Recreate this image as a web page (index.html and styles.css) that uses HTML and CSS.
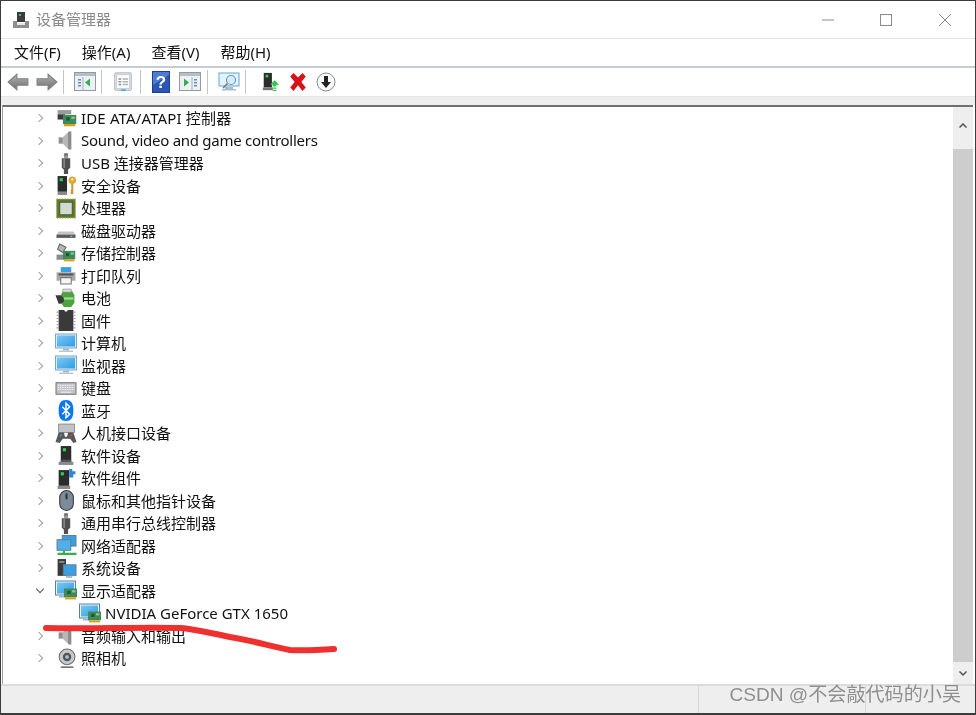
FILE: index.html
```html
<!DOCTYPE html>
<html lang="zh-CN">
<head>
<meta charset="utf-8">
<title>设备管理器</title>
<link rel="stylesheet" href="styles.css">
</head>
<body>
<svg class="defs" width="0" height="0" aria-hidden="true">
  <defs>
    <linearGradient id="arrow-grad" x1="0" y1="0" x2="0" y2="1"><stop offset="0" stop-color="#b4b4b4"/><stop offset="1" stop-color="#6e6e6e"/></linearGradient>
    <linearGradient id="screen-grad" x1="0" y1="0" x2="1" y2="1"><stop offset="0" stop-color="#7cc8f2"/><stop offset="1" stop-color="#2f9ce6"/></linearGradient>
    <symbol id="card" viewBox="0 0 12 12"><rect x="0" y="1" width="12" height="8" fill="#3f8a5a"/><rect x="3" y="3" width="3" height="3" fill="#1d5a38"/><rect x="7.5" y="2.5" width="3" height="2" fill="#8fc79a"/><rect x="1" y="9" width="10" height="2" fill="#d8a020"/></symbol>
    <symbol id="plug" viewBox="0 0 20 20"><rect x="8" y="0" width="4" height="5" fill="#9a9a9a"/><rect x="8.8" y="1.2" width="0.9" height="1.2" fill="#333"/><rect x="10.4" y="1.2" width="0.9" height="1.2" fill="#333"/><path d="M6 5h8v9l-2 2v4H8v-4l-2-2z" fill="#505050"/><path d="M7.500 5h1.500v9H7.500z" fill="#8a8a8a"/></symbol>
    <symbol id="tower" viewBox="0 0 20 20"><path d="M5 1h10v15H5z" fill="#2c2c2c"/><rect x="7" y="3" width="3" height="3" fill="#2fd04f"/><path d="M3 16h14v3H3z" fill="#8a8a8a"/><path d="M5 14h10v2H5z" fill="#555"/></symbol>
    <symbol id="screen" viewBox="0 0 22 20"><rect x="0.500" y="0.500" width="21" height="14" fill="#d8ecf8" stroke="#7aa6c6"/><path d="M2 2h18v11H2z" fill="url(#screen-grad)"/><path d="M8 15h6v2H8z" fill="#9fb7c8"/><path d="M4 17h14v1.500H4z" fill="#b6c6d2"/></symbol>
    <symbol id="screen-card" viewBox="0 0 22 20"><rect x="0.500" y="0.500" width="20" height="14" fill="#e8f3fa" stroke="#5f7f98"/><path d="M2 2h17v11H2z" fill="url(#screen-grad)"/><path d="M4 15h8v2H4z" fill="#9fb7c8"/><use href="#card" x="9" y="7" width="13" height="13"/></symbol>
    <symbol id="speaker" viewBox="0 0 20 20"><path d="M3 7h4v6H3z" fill="#8f8f8f"/><path d="M7 7l6-6h2v18h-2l-6-6z" fill="#b8b8b8"/><path d="M12 2h3v16h-3z" fill="#8c8c8c"/></symbol>
    <symbol id="window-l" viewBox="0 0 22 20"><rect x="0.500" y="0.500" width="21" height="18" fill="#eef1f4" stroke="#8f9aa3"/><rect x="1" y="1" width="20" height="3" fill="#b6bec6"/><path d="M4 7h3v1.600H4zm0 3h3v1.600H4zm0 3h3v1.600H4z" fill="#5d8fc0"/><path d="M9 5v13" stroke="#a5afb8"/><path d="M16 6.500v8l-5-4z" fill="#31b14a"/></symbol>
    <symbol id="window-r" viewBox="0 0 22 20"><rect x="0.500" y="0.500" width="21" height="18" fill="#eef1f4" stroke="#8f9aa3"/><rect x="1" y="1" width="20" height="3" fill="#b6bec6"/><path d="M15 7h3v1.600h-3zm0 3h3v1.600h-3zm0 3h3v1.600h-3z" fill="#5d8fc0"/><path d="M13 5v13" stroke="#a5afb8"/><path d="M5 6.500v8l5-4z" fill="#31b14a"/></symbol>
  </defs>
</svg>

<main class="window">
  <header class="titlebar">
    <svg class="app-icon" viewBox="0 0 18 18"><rect x="5" y="1" width="8" height="10" fill="#3c3c3c"/><rect x="7" y="3" width="2" height="2" fill="#2fd04f"/><path d="M1 10h4v2h8v-2h4v7H1z" fill="#8e8e8e"/><path d="M5 12h8v2H5z" fill="#e6e6e6"/></svg>
    <span class="title">设备管理器</span>
    <div class="controls">
      <svg class="ctl ctl-min" viewBox="0 0 12 12"><path d="M0 6h12" stroke="#8c8c8c"/></svg>
      <svg class="ctl ctl-max" viewBox="0 0 12 12"><rect x="0.500" y="0.500" width="11" height="11" fill="none" stroke="#8c8c8c"/></svg>
      <svg class="ctl ctl-close" viewBox="0 0 12 12"><path d="M0 0l12 12M12 0L0 12" stroke="#8c8c8c"/></svg>
    </div>
  </header>

  <nav class="menubar">
    <span class="menu">文件(F)</span><span class="menu">操作(A)</span><span class="menu">查看(V)</span><span class="menu">帮助(H)</span>
  </nav>

  <div class="toolbar">
    <span class="tool"><svg viewBox="0 0 20 16"><path d="M9 1v4h10v6H9v4L1 8z" fill="url(#arrow-grad)" stroke="#808080"/></svg></span>
    <span class="tool"><svg viewBox="0 0 20 16"><path d="M11 1v4H1v6h10v4l8-7z" fill="url(#arrow-grad)" stroke="#808080"/></svg></span>
    <span class="sep"></span>
    <span class="tool"><svg viewBox="0 0 22 20"><use href="#window-l"/></svg></span>
    <span class="sep"></span>
    <span class="tool"><svg viewBox="0 0 20 22"><rect x="1" y="1" width="18" height="19" rx="1" fill="#f1f3f5" stroke="#9aa2a9"/><rect x="3" y="3" width="14" height="15" fill="#fff" stroke="#c2c8cd"/><path d="M5 7h3v1.500H5zm0 3h3v1.500H5zm0 3h3v1.500H5z" fill="#7f93a5"/><path d="M9.500 7h6v1.500h-6zm0 3h6v1.500h-6zm0 3h6v1.500h-6z" fill="#aab4bc"/><rect x="8" y="19" width="5" height="2" fill="#4aa6e0"/></svg></span>
    <span class="sep"></span>
    <span class="tool tool-tall"><svg viewBox="0 0 18 22"><rect x="0.500" y="0.500" width="17" height="21" fill="#2d56b4" stroke="#1f3f8c"/><path d="M1 1h16v3L1 14z" fill="#4f7bd4"/><text class="help-q" x="9" y="17" text-anchor="middle">?</text></svg></span>
    <span class="tool"><svg viewBox="0 0 22 20"><use href="#window-r"/></svg></span>
    <span class="sep"></span>
    <span class="tool"><svg viewBox="0 0 22 20"><rect x="1" y="1" width="20" height="13" fill="#e3f2fb" stroke="#5fa8d8"/><path d="M7 15h8v2H7zM4 17h14v1.500H4z" fill="#a9bcc9"/><circle cx="13" cy="8" r="4.500" fill="#d6eefa" stroke="#6d99b5" stroke-width="1.200"/><path d="M9.500 11.500L5 16" stroke="#6f7c85" stroke-width="1.600"/></svg></span>
    <span class="sep sep-wide"></span>
    <span class="tool tool-a"><svg viewBox="0 0 20 22"><path d="M2 1h9v16H2z" fill="#2c2c2c"/><rect x="4" y="3" width="3" height="3" fill="#2fd04f"/><path d="M1 17h11v3H1z" fill="#777"/><path d="M14 9l5 5h-3v2h-4v-2H9z" fill="#2fc94f"/><path d="M12 17h4v1.500h-4zM12 19.500h4V21h-4z" fill="#2fc94f"/></svg></span>
    <span class="tool tool-b"><svg viewBox="0 0 18 18"><path d="M2 4l3-3 4 4 4-4 3 3-4 5 4 5-3 3-4-5-4 5-3-3 4-5z" fill="#d8121c"/></svg></span>
    <span class="tool"><svg viewBox="0 0 20 20"><circle cx="10" cy="10" r="9" fill="#fafafa" stroke="#8a8a8a"/><path d="M8 4h4v6h3l-5 6-5-6h3z" fill="#222"/></svg></span>
  </div>

  <div class="band"></div>

  <section class="content">
    <div class="tree">
      <div class="row"><span class="chev"></span><svg class="ico" viewBox="0 0 20 20"><path d="M2 2h13v4H2z" fill="#9a9a9a"/><path d="M2 6h7v5H2z" fill="#3a3a3a"/><use href="#card" x="7" y="5" width="13" height="14"/></svg><span class="label label-wide">IDE ATA/ATAPI 控制器</span></div>
      <div class="row"><span class="chev"></span><svg class="ico"><use href="#speaker"/></svg><span class="label label-tight">Sound, video and game controllers</span></div>
      <div class="row"><span class="chev"></span><svg class="ico"><use href="#plug"/></svg><span class="label">USB 连接器管理器</span></div>
      <div class="row"><span class="chev"></span><svg class="ico" viewBox="0 0 20 20"><path d="M2 1h9v15H2z" fill="#2c2c2c"/><rect x="4" y="3" width="3" height="3" fill="#2fd04f"/><path d="M2 16h9v3H2z" fill="#8a8a8a"/><circle cx="16" cy="5" r="3.600" fill="#e2a93a"/><circle cx="16" cy="4" r="1" fill="#fff"/><path d="M15 8h2v10h-2l-1-1 1-1-1-1 1-1z" fill="#d0982c"/></svg><span class="label">安全设备</span></div>
      <div class="row"><span class="chev"></span><svg class="ico" viewBox="0 0 20 20"><rect x="1" y="1" width="18" height="18" fill="#5b7a3a"/><rect x="1" y="1" width="18" height="18" fill="none" stroke="#c9a43c" stroke-dasharray="1.500 1"/><rect x="4" y="4" width="12" height="12" fill="#d3d9cf" stroke="#3f5f2a"/></svg><span class="label">处理器</span></div>
      <div class="row"><span class="chev"></span><svg class="ico" viewBox="0 0 20 20"><path d="M3 11h14l2 3v3H1v-3z" fill="#c4c4c4"/><path d="M1 14h18v3H1z" fill="#5a5a5a"/><rect x="14" y="15" width="2" height="1" fill="#6ddc6d"/></svg><span class="label">磁盘驱动器</span></div>
      <div class="row"><span class="chev"></span><svg class="ico" viewBox="0 0 20 20"><path d="M4 1l6 3-3 5-5-3z" fill="#b5b5b5" stroke="#666"/><path d="M1 11h9v5H1z" fill="#8c8c8c"/><use href="#card" x="7" y="6" width="12" height="13"/></svg><span class="label">存储控制器</span></div>
      <div class="row"><span class="chev"></span><svg class="ico" viewBox="0 0 20 20"><path d="M5 2h10v5H5z" fill="#3aa0e2"/><path d="M1 7h18v8H1z" fill="#a8a8a8"/><path d="M3 8h14v2H3z" fill="#555"/><path d="M5 12h10v6H5z" fill="#f6f6f6" stroke="#777"/></svg><span class="label">打印队列</span></div>
      <div class="row"><span class="chev"></span><svg class="ico" viewBox="0 0 20 20"><path d="M7 3h9l2 4v7l-3 4H8l-3-4V7z" fill="#4ba43f"/><path d="M7 1h8v3H7z" fill="#dcdcdc" stroke="#777" stroke-width="0.500"/><path d="M0 7h5l3 3v3l-3 2H3z" fill="#3a3a3a"/><path d="M8 9h9v2H8z" fill="#a9dc9f"/></svg><span class="label">电池</span></div>
      <div class="row"><span class="chev"></span><svg class="ico" viewBox="0 0 20 20"><path d="M3 0h5l2 2 2-2h5v20H3z" fill="#3a3a3a"/><path d="M3 2h-2M3 5h-2M3 8h-2M3 11h-2M3 14h-2M3 17h-2M17 2h2M17 5h2M17 8h2M17 11h2M17 14h2M17 17h2" stroke="#9a9a9a"/></svg><span class="label">固件</span></div>
      <div class="row"><span class="chev"></span><svg class="ico"><use href="#screen"/></svg><span class="label">计算机</span></div>
      <div class="row"><span class="chev"></span><svg class="ico"><use href="#screen"/></svg><span class="label">监视器</span></div>
      <div class="row"><span class="chev"></span><svg class="ico" viewBox="0 0 20 20"><rect x="0.500" y="4.500" width="19" height="11" fill="#bfc3c7" stroke="#777"/><path d="M2 7h16M2 9h16M2 11h16" stroke="#eef0f2" stroke-dasharray="1.500 0.700"/><path d="M5 13.500h10" stroke="#eef0f2"/></svg><span class="label">键盘</span></div>
      <div class="row"><span class="chev"></span><svg class="ico" viewBox="0 0 20 20"><path d="M10 0c5 0 7 3 7 10s-2 10-7 10-7-3-7-10S5 0 10 0z" fill="#0a78ee"/><path d="M6.500 6.500l7 7L10 17V3l3.500 3.500-7 7" fill="none" stroke="#fff" stroke-width="1.400"/></svg><span class="label">蓝牙</span></div>
      <div class="row"><span class="chev"></span><svg class="ico" viewBox="0 0 20 20"><rect x="3" y="1" width="15" height="8" fill="#bfc3c7" stroke="#777" stroke-width="0.700"/><path d="M0 18l3-9h5l1 4h2l1-4h5l3 9-3 1-3-4H7l-3 4z" fill="#585858"/><circle cx="5" cy="12" r="1" fill="#3aa0e2"/><circle cx="15" cy="12" r="1" fill="#d8402c"/></svg><span class="label">人机接口设备</span></div>
      <div class="row"><span class="chev"></span><svg class="ico"><use href="#tower"/></svg><span class="label">软件设备</span></div>
      <div class="row"><span class="chev"></span><svg class="ico" viewBox="0 0 20 20"><path d="M3 2h10v15H3z" fill="#2c2c2c"/><rect x="5" y="4" width="3" height="3" fill="#2fd04f"/><path d="M2 17h12v3H2z" fill="#8a8a8a"/><path d="M13 1h3v2h3v3h-2v3h-4z" fill="#2f86d8"/></svg><span class="label">软件组件</span></div>
      <div class="row"><span class="chev"></span><svg class="ico" viewBox="0 0 20 20"><rect x="4" y="0.500" width="13" height="19" rx="6.500" fill="#7c8a9a" stroke="#3a3a3a"/><rect x="9.500" y="3" width="2" height="6" rx="1" fill="#30363c"/></svg><span class="label">鼠标和其他指针设备</span></div>
      <div class="row"><span class="chev"></span><svg class="ico"><use href="#plug"/></svg><span class="label">通用串行总线控制器</span></div>
      <div class="row"><span class="chev"></span><svg class="ico" viewBox="0 0 20 20"><rect x="6.500" y="0.500" width="13" height="10" fill="#3aa0e2" stroke="#5f7f98"/><rect x="1.500" y="4.500" width="13" height="10" fill="#4fb0ea" stroke="#5f7f98"/><path d="M8 15v2M2 18h18" stroke="#31b14a" stroke-width="2"/></svg><span class="label">网络适配器</span></div>
      <div class="row"><span class="chev"></span><svg class="ico" viewBox="0 0 20 20"><path d="M2 1h8v16H2z" fill="#3a3a3a"/><rect x="3.500" y="3" width="5" height="1.500" fill="#9a9a9a"/><rect x="7.500" y="6.500" width="12" height="10" fill="#3aa0e2" stroke="#5f7f98"/><path d="M10 17h6v2h-6z" fill="#a9bcc9"/></svg><span class="label">系统设备</span></div>
      <div class="row"><span class="chev chev-open"></span><svg class="ico"><use href="#screen-card"/></svg><span class="label">显示适配器</span></div>
      <div class="row row-child"><svg class="ico"><use href="#screen-card"/></svg><span class="label">NVIDIA GeForce GTX 1650</span></div>
      <div class="row"><span class="chev"></span><svg class="ico"><use href="#speaker"/></svg><span class="label">音频输入和输出</span></div>
      <div class="row"><span class="chev"></span><svg class="ico" viewBox="0 0 20 20"><circle cx="11" cy="8.500" r="7.500" fill="#c9c9c9" stroke="#6f6f6f"/><circle cx="11" cy="8.500" r="4" fill="#4a5560"/><circle cx="11" cy="8.500" r="1.800" fill="#a8c0d2"/><path d="M5 19h12v-1.500H5z" fill="#6f6f6f"/></svg><span class="label">照相机</span></div>
    </div>
    <div class="scrollbar">
      <span class="arrow"><svg viewBox="0 0 8 5"><path d="M0.500 4.500L4 1l3.500 3.500" fill="none" stroke="#555" stroke-width="1.500"/></svg></span>
      <span class="track"><span class="thumb"></span></span>
      <span class="arrow arrow-down"><svg viewBox="0 0 8 5"><path d="M0.500 0.500L4 4l3.500-3.500" fill="none" stroke="#555" stroke-width="1.500"/></svg></span>
    </div>
  </section>

  <footer class="statusbar"><span class="status-cell"></span><span class="status-cell status-mid"></span><span class="status-cell status-end"></span></footer>

  <svg class="scribble" viewBox="0 0 976 715"><path d="M46 628C90 629 140 627 180 628C195 629 205 632 230 637C250 640 270 646 290 650C305 651 320 650 334 649" fill="none" stroke="#f0302f" stroke-width="6" stroke-linecap="round"/></svg>
  <span class="watermark">CSDN @不会敲代码的小吴</span>
</main>
</body>
</html>
```
FILE: styles.css
```css
* { box-sizing: border-box; }
html, body { margin: 0; padding: 0; height: 100%; background: #fff; }
body { font-family: "Noto Sans", "Noto Sans CJK SC", sans-serif; color: #111; overflow: hidden; }
.defs { position: absolute; }

.window {
  position: relative;
  width: 976px;
  height: 715px;
  display: flex;
  flex-direction: column;
  border: 1px solid #3c3c3c;
  border-width: 1px 1px 2px 1px;
  background: #fff;
  filter: blur(0.35px);
}

.titlebar { height: 38px; display: flex; align-items: center; padding-left: 11px; border-bottom: 1px solid #e6e6e6; flex: none; }
.app-icon { width: 18px; height: 18px; }
.title { margin-left: 6px; margin-bottom: 3px; font-size: 15px; color: #8a8a8a; }
.controls { margin-left: auto; display: flex; align-items: center; padding-right: 24px; }
.ctl { width: 12px; height: 12px; }
.ctl-max { margin-left: 46px; }
.ctl-close { margin-left: 47px; }

.menubar { height: 29px; display: flex; align-items: center; padding-left: 13px; padding-bottom: 3px; gap: 21px; border-bottom: 2px solid #c6ccd4; flex: none; }
.menu { font-size: 15px; color: #111; }

.toolbar { height: 28px; display: flex; align-items: center; padding-left: 2px; flex: none; }
.tool { width: 29px; height: 22px; display: flex; align-items: center; justify-content: center; flex: none; }
.tool svg { width: 22px; height: 20px; }
.tool-tall svg { height: 22px; }
.tool-a { width: 26px; }
.tool-b { width: 28px; }
.sep { width: 9.300px; height: 24px; flex: none; }
.sep::before { content: ""; display: block; width: 1px; height: 24px; margin-left: 2px; background: #c4c4c4; }
.sep-wide { width: 14.500px; }
.help-q { font-family: "Liberation Sans", sans-serif; font-size: 17px; font-weight: 700; fill: #fff; }

.band { height: 9px; background: #eeeeee; border-top: 1px solid #e6e6e6; flex: none; }

.content { flex: 1; min-height: 0; display: flex; margin-left: 1px; border-top: 2px solid #6f6f6f; border-left: 1px solid #a0a0a0; margin-right: 2px; }
.tree { flex: 1; padding: 0 0 0 33px; }
.row { display: flex; align-items: center; height: 22.500px; }
.row-child { padding-left: 43px; }
.chev { width: 8px; height: 8px; position: relative; flex: none; margin-right: 11px; }
.chev::before { content: ""; position: absolute; left: 0; top: 1px; width: 5px; height: 5px; border-top: 1.200px solid #a0a0a0; border-right: 1.200px solid #a0a0a0; transform: rotate(45deg); }
.chev-open::before { left: 1px; top: -1px; border-color: #555; transform: rotate(135deg); }
.ico { width: 22px; height: 21px; flex: none; }
.label { margin-left: 4px; margin-bottom: 1px; font-size: 15px; color: #111; white-space: nowrap; }
.label-tight { letter-spacing: -0.270px; }
.label-wide { letter-spacing: 0.150px; }

.scrollbar { width: 20px; flex: none; background: #eeeeee; display: flex; flex-direction: column; }
.arrow { height: 42px; display: flex; align-items: center; justify-content: center; flex: none; padding-bottom: 6px; }
.arrow svg { width: 8px; height: 5px; }
.arrow-down { height: 22px; padding-bottom: 0; }
.track { flex: 1; min-height: 0; display: flex; }
.thumb { flex: 1; background: #cdcdcd; }

.statusbar { height: 29px; display: flex; flex: none; background: #eeeeee; border-top: 2px solid #dcdcdc; }
.status-cell { flex: 1; }
.status-mid { flex: none; width: 168px; border-left: 1px solid #d9d9d9; border-right: 1px solid #d9d9d9; }
.status-end { flex: none; width: 109px; }

.scribble { position: absolute; left: -1px; top: -1px; width: 976px; height: 715px; pointer-events: none; }
.watermark { position: absolute; right: 14px; bottom: 6px; font-family: "Liberation Sans", "Noto Sans CJK SC", sans-serif; font-size: 19.100px; color: #8f8f8f; }
```
